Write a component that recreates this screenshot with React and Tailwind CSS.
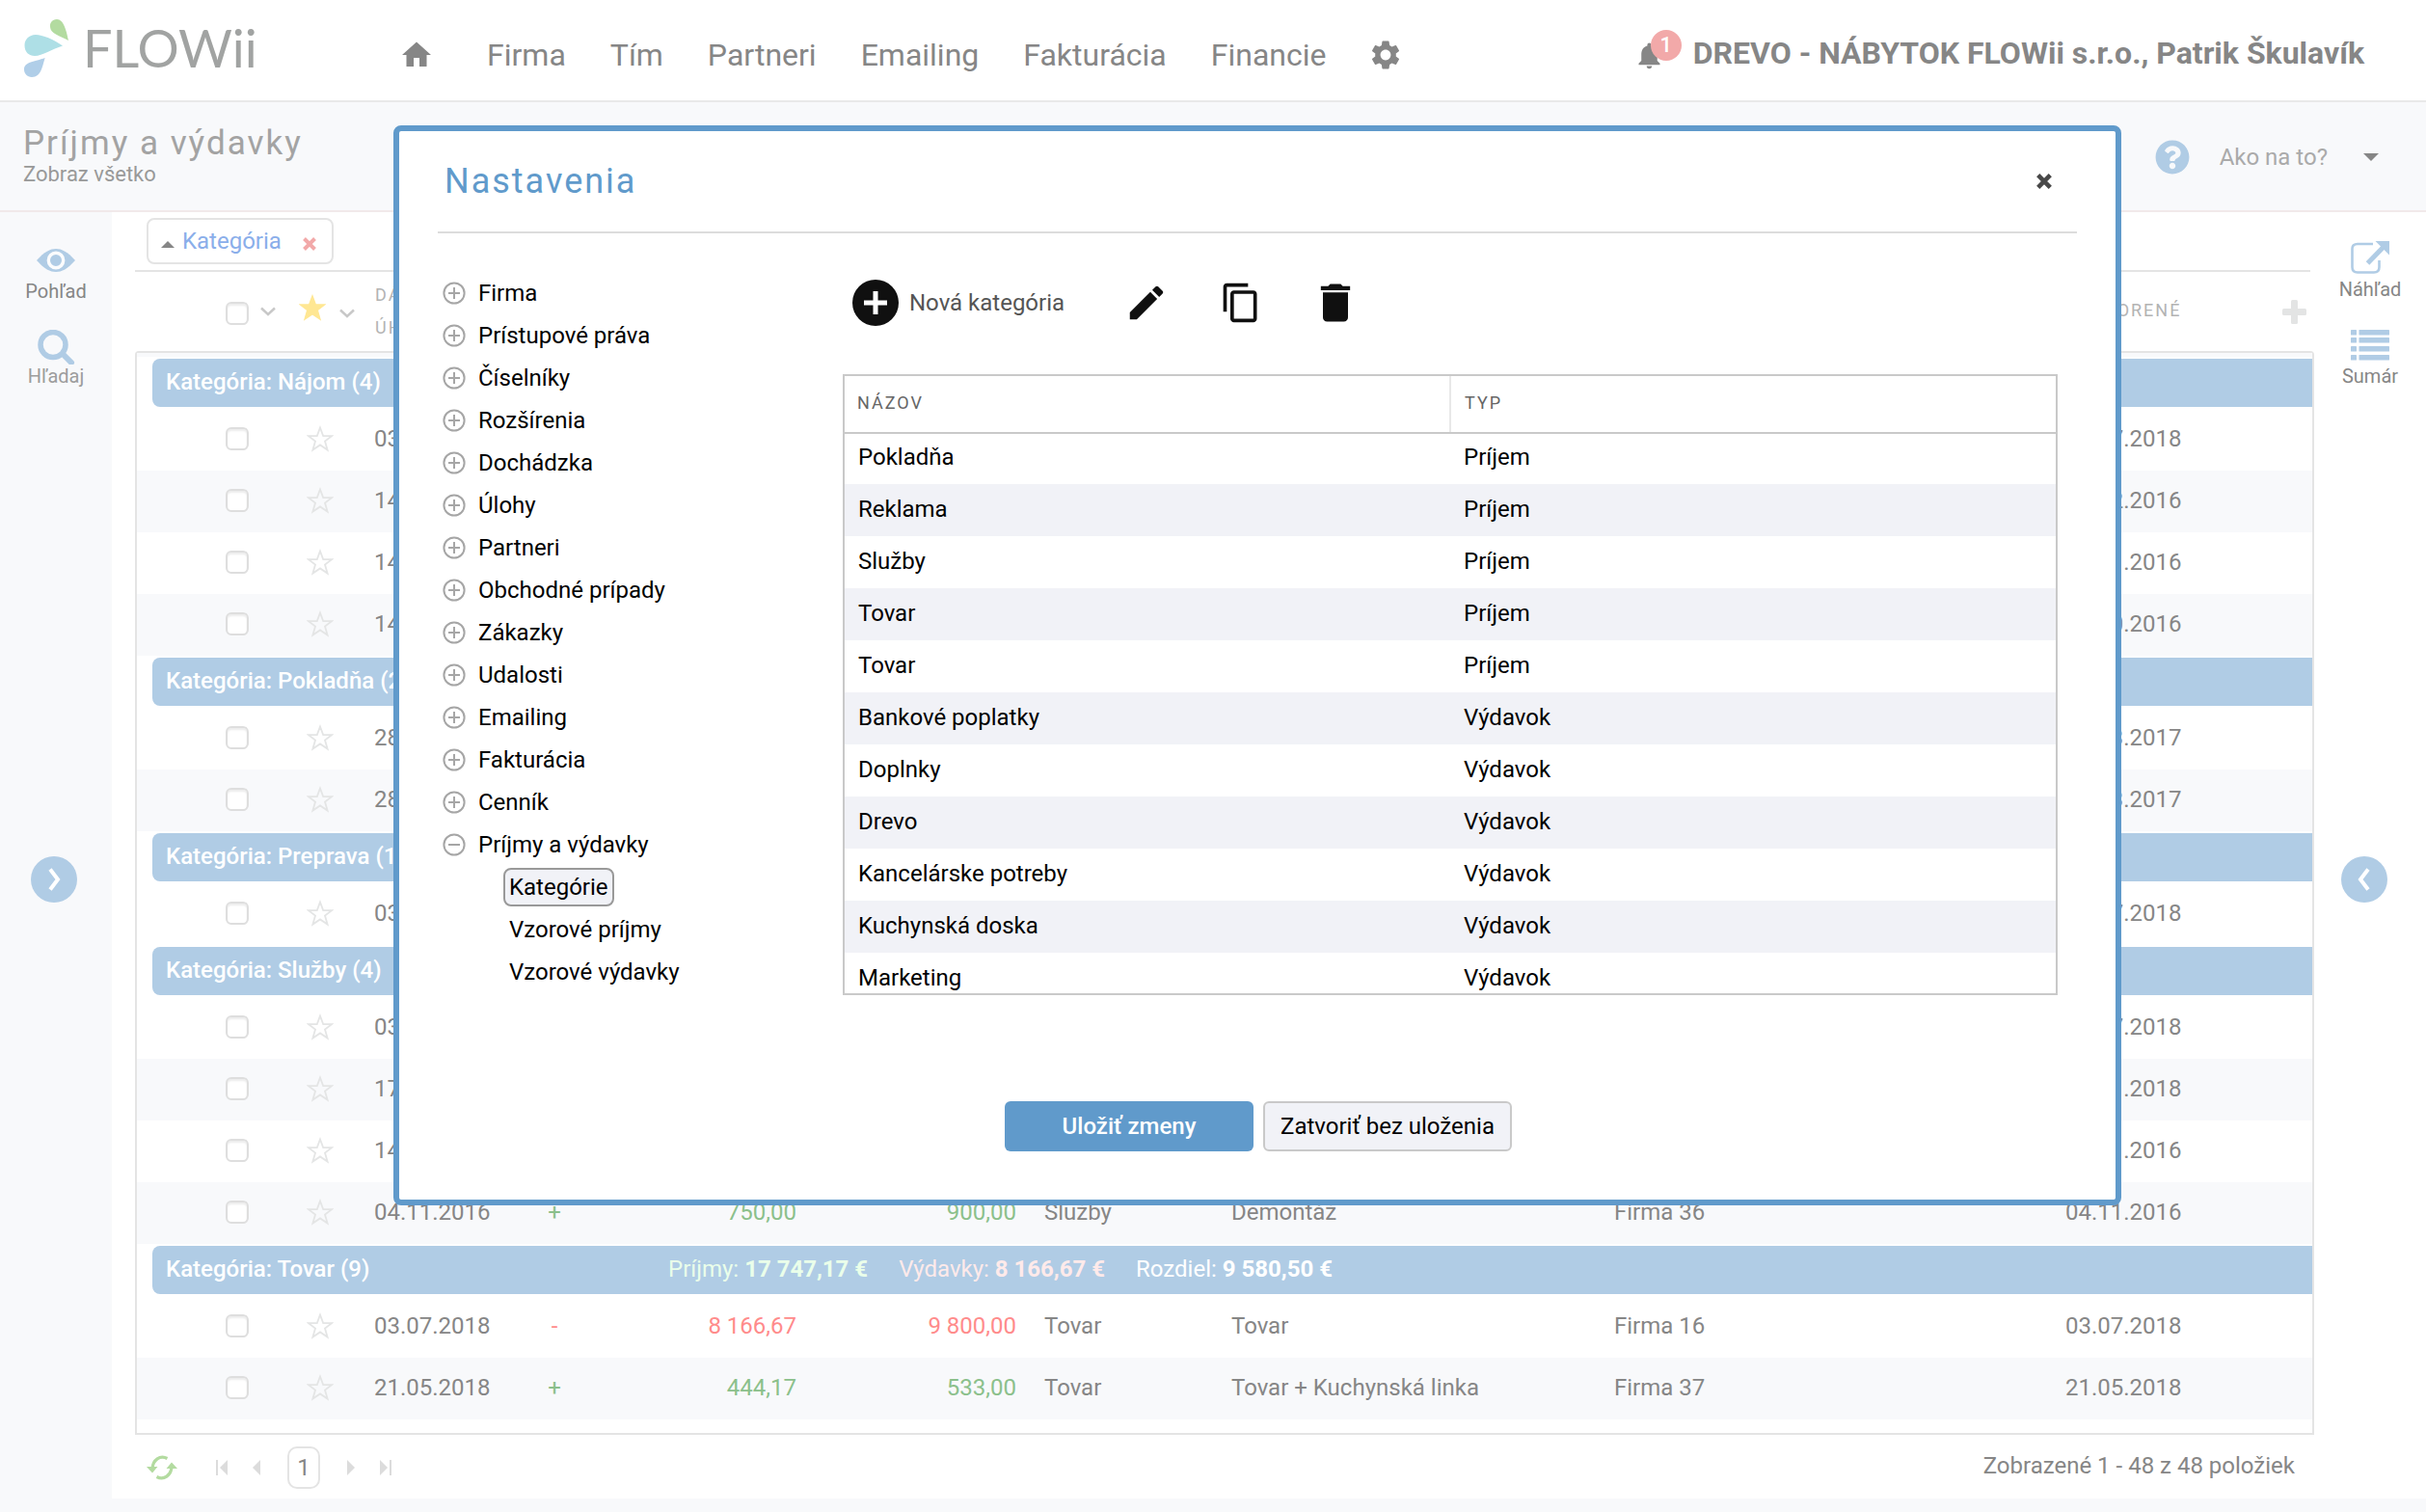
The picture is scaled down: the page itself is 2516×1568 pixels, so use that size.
import { useState } from 'react'
import { MdHome, MdSettings, MdNotifications, MdEdit, MdContentCopy, MdDelete } from 'react-icons/md'
import { FaQuestionCircle } from 'react-icons/fa'

const navItems = ['Firma', 'Tím', 'Partneri', 'Emailing', 'Fakturácia', 'Financie']

const groups = [
  {
    name: 'Nájom',
    count: 4,
    rows: [
      { paid: '03.07.2018', created: '03.07.2018' },
      { paid: '14.12.2016', created: '14.12.2016' },
      { paid: '14.11.2016', created: '14.11.2016' },
      { paid: '14.10.2016', created: '14.10.2016' },
    ],
  },
  {
    name: 'Pokladňa',
    count: 2,
    rows: [
      { paid: '28.03.2017', created: '28.03.2017' },
      { paid: '28.03.2017', created: '28.03.2017' },
    ],
  },
  {
    name: 'Preprava',
    count: 1,
    rows: [{ paid: '03.07.2018', created: '03.07.2018' }],
  },
  {
    name: 'Služby',
    count: 4,
    rows: [
      { paid: '03.07.2018', created: '03.07.2018' },
      { paid: '17.01.2018', created: '17.01.2018' },
      { paid: '14.11.2016', created: '14.11.2016' },
      { paid: '04.11.2016', sign: '+', net: '750,00', gross: '900,00', category: 'Služby', desc: 'Demontáž', partner: 'Firma 36', created: '04.11.2016' },
    ],
  },
  {
    name: 'Tovar',
    count: 9,
    totals: { income: '17 747,17 €', expense: '8 166,67 €', diff: '9 580,50 €' },
    rows: [
      { paid: '03.07.2018', sign: '-', net: '8 166,67', gross: '9 800,00', category: 'Tovar', desc: 'Tovar', partner: 'Firma 16', created: '03.07.2018' },
      { paid: '21.05.2018', sign: '+', net: '444,17', gross: '533,00', category: 'Tovar', desc: 'Tovar + Kuchynská linka', partner: 'Firma 37', created: '21.05.2018' },
    ],
  },
]

const settingsTree = [
  { label: 'Firma' },
  { label: 'Prístupové práva' },
  { label: 'Číselníky' },
  { label: 'Rozšírenia' },
  { label: 'Dochádzka' },
  { label: 'Úlohy' },
  { label: 'Partneri' },
  { label: 'Obchodné prípady' },
  { label: 'Zákazky' },
  { label: 'Udalosti' },
  { label: 'Emailing' },
  { label: 'Fakturácia' },
  { label: 'Cenník' },
  { label: 'Príjmy a výdavky', children: ['Kategórie', 'Vzorové príjmy', 'Vzorové výdavky'] },
]

const categories = [
  ['Pokladňa', 'Príjem'],
  ['Reklama', 'Príjem'],
  ['Služby', 'Príjem'],
  ['Tovar', 'Príjem'],
  ['Tovar', 'Príjem'],
  ['Bankové poplatky', 'Výdavok'],
  ['Doplnky', 'Výdavok'],
  ['Drevo', 'Výdavok'],
  ['Kancelárske potreby', 'Výdavok'],
  ['Kuchynská doska', 'Výdavok'],
  ['Marketing', 'Výdavok'],
]

function Logo() {
  return (
    <a href="#" className="flex items-center gap-3" aria-label="FLOWii">
      <svg width="50" height="64" viewBox="0 0 50 64" aria-hidden="true">
        <path d="M47 24 C45 14 42 2 35 2 C30 2 27.5 6 28 10 C28.5 17 38 19 47 24Z" fill="#b3dba0" />
        <path d="M41 29.5 C32 23 20 18 13 18 C6 18 1.5 23 1.5 29 C1.5 36 6 40 12 40 C20 40 30 33 41 29.5Z" fill="#aedfe6" />
        <path d="M22.7 42 C20 50 19 62 9 62 C4 62 1 58 1 54 C1 46 12 46 22.7 42Z" fill="#b0cee8" />
      </svg>
      <span className="font-['Lato',sans-serif] text-[54px] leading-[62px] text-[#a1a3a2]">FLOWii</span>
    </a>
  )
}

function Star({ filled }) {
  return (
    <svg width="28" height="28" viewBox="0 0 28 28" aria-hidden="true">
      <path
        d="M14 2.5 L17.2 11 L26 11.2 L19 16.6 L21.6 25.5 L14 20.4 L6.4 25.5 L9 16.6 L2 11.2 L10.8 11Z"
        fill={filled ? '#ffe793' : 'none'}
        stroke={filled ? '#ffe793' : '#e4e5e5'}
        strokeWidth="1.8"
      />
    </svg>
  )
}

function ChevronDown() {
  return (
    <svg width="16" height="10" viewBox="0 0 16 10" fill="none" stroke="#c8c8c8" strokeWidth="2.4" aria-hidden="true">
      <path d="M1 1.5 L8 8 L15 1.5" />
    </svg>
  )
}

function Cross({ size, color }) {
  return (
    <svg width={size} height={size} viewBox="0 0 14 14" stroke={color} strokeWidth="4" aria-hidden="true">
      <path d="M1.5 1.5 L12.5 12.5 M12.5 1.5 L1.5 12.5" />
    </svg>
  )
}

function Checkbox({ label }) {
  return (
    <input
      type="checkbox"
      aria-label={label}
      className="block w-6 h-6 appearance-none rounded-md border-2 border-[#dedede] bg-white shadow-[inset_0_2px_2px_#ececec]"
    />
  )
}

function SideButton({ label, labelClass, children }) {
  return (
    <button className="flex flex-col items-center">
      {children}
      <span className={`text-[20px] leading-6 ${labelClass}`}>{label}</span>
    </button>
  )
}

function CircleArrow({ direction }) {
  return (
    <button
      aria-label={direction === 'right' ? 'Rozbaliť ľavý panel' : 'Rozbaliť pravý panel'}
      className={`mt-[486px] flex h-12 w-12 items-center justify-center self-start rounded-full bg-[#b0cce5] ${
        direction === 'right' ? 'ml-8' : 'ml-7'
      }`}
    >
      <svg width="24" height="28" viewBox="0 0 24 28" fill="none" stroke="#fff" strokeWidth="4">
        <path d={direction === 'right' ? 'M8 3.5 L16 14 L8 24.5' : 'M16 3.5 L8 14 L16 24.5'} />
      </svg>
    </button>
  )
}

function Header() {
  return (
    <header className="flex h-[106px] items-center border-b-2 border-[#e9e9e9] pl-6 pr-16 text-[#868686]">
      <div className="w-[390px] pb-1 shrink-0">
        <Logo />
      </div>
      <nav className="flex flex-1 items-center pt-2.5 text-[32px] leading-10">
        <a href="#" aria-label="Domov" className="mr-[55px]"><MdHome size={36} /></a>
        <div className="flex gap-[46px]">
          {navItems.map((item) => (
            <a key={item} href="#">{item}</a>
          ))}
        </div>
        <a href="#" aria-label="Nastavenia" className="ml-[44px]"><MdSettings size={36} /></a>
      </nav>
      <div className="flex items-center pt-1.5">
        <button className="relative mr-[29px] pt-1" aria-label="Upozornenia">
          <MdNotifications size={33} />
          <span className="absolute -top-1.5 left-[18px] flex h-8 w-8 items-center justify-center rounded-full bg-[#f2a9a9] text-[22px] leading-7 font-medium text-white">1</span>
        </button>
        <button className="text-[32px] leading-10 font-bold">DREVO - NÁBYTOK FLOWii s.r.o., Patrik Škulavík</button>
      </div>
    </header>
  )
}

function SubHeader() {
  return (
    <div className="flex h-[114px] items-center justify-between border-b-2 border-[#f1e9ea] bg-[#f8f9fb] pl-6 pr-[49px]">
      <div className="pb-0.5">
        <h1 className="text-[35px] leading-10 tracking-[2px] text-[#a3a3a3]">Príjmy a výdavky</h1>
        <p className="text-[22px] leading-6 text-[#999]">Zobraz všetko</p>
      </div>
      <div className="flex items-center pt-0.5 text-[24px] text-[#aaa]">
        <FaQuestionCircle size={36} color="#b0cce5" className="mr-[31px]" />
        <button className="flex items-center gap-[37px]">
          Ako na to?
          <svg width="16" height="8" viewBox="0 0 16 8" fill="#868686"><path d="M0 0 H16 L8 8Z" /></svg>
        </button>
      </div>
    </div>
  )
}

function LeftPanel() {
  return (
    <aside className="flex w-[116px] shrink-0 flex-col items-center bg-[#f8f9fb] pt-[34px]">
      <SideButton label="Pohľad" labelClass="mt-1 text-[#868686]">
        <svg width="40" height="32" viewBox="0 0 40 32">
          <path d="M0 16 C8 7 14 4 20 4 C26 4 32 7 40 16 C32 25 26 28 20 28 C14 28 8 25 0 16Z" fill="#b0cce5" />
          <circle cx="20" cy="16" r="7.7" fill="#b0cce5" stroke="#fbfcfd" strokeWidth="3.4" />
        </svg>
      </SideButton>
      <div className="h-7" />
      <SideButton label="Hľadaj" labelClass="text-[#9d9d9d]">
        <svg width="40" height="36" viewBox="0 0 40 36" fill="none" stroke="#b0cce5">
          <circle cx="17" cy="15.5" r="13" strokeWidth="5.5" />
          <path d="M27 25 L36 34" strokeWidth="6" strokeLinecap="round" />
        </svg>
      </SideButton>
      <CircleArrow direction="right" />
    </aside>
  )
}

function RightPanel() {
  return (
    <aside className="flex w-[116px] shrink-0 flex-col items-center bg-white pt-7">
      <SideButton label="Náhľad" labelClass="mt-1 text-[#868686]">
        <svg width="40" height="36" viewBox="0 0 40 36" fill="none" stroke="#b0cce5">
          <path d="M23 5 H7 Q1.5 5 1.5 10 V29 Q1.5 34.5 7 34.5 H24 Q29.5 34.5 29.5 29 V22" strokeWidth="2.6" />
          <path d="M17.5 25 L34 8" strokeWidth="5" />
          <path d="M25.5 2 H40 V16.5Z" fill="#b0cce5" stroke="none" />
        </svg>
      </SideButton>
      <div className="h-7" />
      <SideButton label="Sumár" labelClass="mt-1 text-[#868686]">
        <svg width="40" height="34" viewBox="0 0 40 34" fill="#b0cce5">
          {[2, 10, 19, 28].map((y) => (
            <g key={y}>
              <rect x="0" y={y} width="6" height="5.5" rx="0.6" />
              <rect x="8.5" y={y} width="31.5" height="5.5" rx="0.6" />
            </g>
          ))}
        </svg>
      </SideButton>
      <CircleArrow direction="left" />
    </aside>
  )
}

function ListHeader() {
  return (
    <div className="flex h-[82px] items-center pl-[94px] text-[18px] leading-[34px] tracking-[2px] text-[#b3b3b3]">
      <div className="pt-1"><Checkbox label="Označiť všetko" /></div>
      <button aria-label="Možnosti výberu" className="ml-3"><ChevronDown /></button>
      <button aria-label="Obľúbené" className="ml-6 pb-2"><Star filled /></button>
      <button aria-label="Možnosti obľúbených" className="ml-[14px] pt-1"><ChevronDown /></button>
      <div className="ml-[21px] w-[166px]">DÁTUM<br />ÚHRADY</div>
      <div className="ml-auto w-[224px] pb-0.5">VYTVORENÉ</div>
      <button aria-label="Pridať stĺpec" className="mr-2">
        <svg width="25" height="25" viewBox="0 0 25 25" fill="#e3e4e4">
          <rect x="9" y="0" width="7" height="25" rx="1.5" />
          <rect x="0" y="9" width="25" height="7" rx="1.5" />
        </svg>
      </button>
    </div>
  )
}

function GroupRows({ group }) {
  return (
    <>
      <tr>
        <td colSpan={10} className="py-0.5 pl-4">
          <div className="flex h-[50px] items-center rounded-l-lg bg-[#b0cce5] pb-0.5 pl-[14px] text-white">
            <span className="w-[521px] font-medium">Kategória: {group.name} ({group.count})</span>
            {group.totals && (
              <div className="flex gap-8">
                <span className="text-[#eaffea]">Príjmy: <b>{group.totals.income}</b></span>
                <span className="text-[#ffeaea]">Výdavky: <b>{group.totals.expense}</b></span>
                <span>Rozdiel: <b>{group.totals.diff}</b></span>
              </div>
            )}
          </div>
        </td>
      </tr>
      {group.rows.map((row, i) => {
        const money = row.sign === '-' ? 'text-[#ff8b8b]' : 'text-[#8bc08b]'
        return (
          <tr key={i} className={`h-16 [&>td]:pb-0.5 ${i % 2 ? 'bg-[#f8f9fb]' : 'bg-white'}`}>
            <td className="pl-[92px]"><Checkbox label={`Označiť ${row.paid}`} /></td>
            <td className="pl-2">
              <button className="block" aria-label="Pridať k obľúbeným"><Star /></button>
            </td>
            <td>{row.paid}</td>
            <td className={`text-center ${money}`}>{row.sign}</td>
            <td className={`text-right ${money}`}>{row.net}</td>
            <td className={`text-right ${money}`}>{row.gross}</td>
            <td className="pl-[29px]">{row.category}</td>
            <td>{row.desc}</td>
            <td>{row.partner}</td>
            <td>{row.created}</td>
          </tr>
        )
      })}
    </>
  )
}

function Pagination() {
  return (
    <div className="flex h-[66px] items-center pl-3 pr-5 pt-0.5 text-[24px] text-[#868686]">
      <button aria-label="Obnoviť" className="mr-10">
        <svg width="32" height="26" viewBox="0 0 32 26" fill="none" stroke="#b3dba0" strokeWidth="3.2">
          <path d="M21.5 3.5 C14 -0.5 6.5 5 6 14" />
          <path d="M10.5 22.5 C18 26.5 25.5 21 26 12" />
          <path d="M0 12 H11.5 L6 18.5Z M20.5 14 H32 L26 7.5Z" fill="#b3dba0" stroke="none" />
        </svg>
      </button>
      <button aria-label="Prvá strana" className="mr-[26px]">
        <svg width="12" height="16" viewBox="0 0 12 16" fill="#dcdcdc"><path d="M0 0 H2 V16 H0Z M12 0 V16 L4 8Z" /></svg>
      </button>
      <button aria-label="Predchádzajúca strana">
        <svg width="8" height="16" viewBox="0 0 8 16" fill="#dcdcdc"><path d="M8 0 V16 L0 8Z" /></svg>
      </button>
      <button className="mx-7 h-11 w-[34px] rounded-[10px] border-2 border-[#e4e4e4]">1</button>
      <button aria-label="Ďalšia strana" className="mr-[26px]">
        <svg width="8" height="16" viewBox="0 0 8 16" fill="#dcdcdc"><path d="M0 0 V16 L8 8Z" /></svg>
      </button>
      <button aria-label="Posledná strana">
        <svg width="12" height="16" viewBox="0 0 12 16" fill="#dcdcdc"><path d="M10 0 H12 V16 H10Z M0 0 V16 L8 8Z" /></svg>
      </button>
      <span className="ml-auto pb-1">Zobrazené 1 - 48 z 48 položiek</span>
    </div>
  )
}

function RecordList() {
  return (
    <main className="min-w-0 flex-1 pl-6 pt-1.5">
      <div className="ml-3 flex h-12 w-[194px] items-center rounded-lg border-2 border-[#e4e4e4] pl-[13px] text-[24px] text-[#8aaeea]">
        <svg width="14" height="7" viewBox="0 0 14 7" fill="#868686" className="mt-1.5"><path d="M0 7 H14 L7 0Z" /></svg>
        <span className="ml-2">Kategória</span>
        <button aria-label="Zrušiť zoskupenie" className="ml-[22px] mt-1.5"><Cross size={14} color="#f2a9a9" /></button>
      </div>
      <div className="mt-1.5 mr-1 h-0.5 bg-[#e4e4e4]" />
      <ListHeader />
      <div className="rounded-t border-2 border-[#e4e4e4] pb-3.5">
        <div className="h-1 bg-[#f8f9fb]" />
        <table className="w-full table-fixed border-collapse text-[24px] leading-8 text-[#868686]">
          <colgroup>
            <col className="w-[168px]" />
            <col className="w-[78px]" />
            <col className="w-[167px]" />
            <col className="w-[40px]" />
            <col className="w-[231px]" />
            <col className="w-[228px]" />
            <col className="w-[223px]" />
            <col />
            <col className="w-[468px]" />
            <col className="w-[256px]" />
          </colgroup>
          <tbody>
            {groups.map((g) => (
              <GroupRows key={g.name} group={g} />
            ))}
          </tbody>
        </table>
      </div>
      <Pagination />
    </main>
  )
}

function TreeIcon({ open }) {
  return (
    <svg width="24" height="24" viewBox="0 0 24 24" fill="none" stroke="#a6a6a6" strokeWidth="2" aria-hidden="true">
      <circle cx="12" cy="12" r="10.6" />
      <path d={open ? 'M6 12 H18' : 'M6 12 H18 M12 6 V18'} />
    </svg>
  )
}

function SettingsTree({ active, onSelect }) {
  return (
    <ul className="w-[420px] shrink-0 pl-[5px] pt-10 text-[24px] leading-[44px]">
      {settingsTree.map((node) => (
        <li key={node.label}>
          <button className="flex items-center gap-[13px]">
            <TreeIcon open={!!node.children} />
            {node.label}
          </button>
          {node.children && (
            <ul className="pl-[63px]">
              {node.children.map((child) => (
                <li key={child} className="flex h-11 items-center">
                  <button
                    onClick={() => onSelect(child)}
                    className={`h-10 rounded-lg border-2 px-1 leading-9 ${
                      child === active ? 'border-[#999] bg-[#f1f2f7]' : 'border-transparent'
                    }`}
                  >
                    {child}
                  </button>
                </li>
              ))}
            </ul>
          )}
        </li>
      ))}
    </ul>
  )
}

function SettingsDialog() {
  const [active, setActive] = useState('Kategórie')

  return (
    <div
      role="dialog"
      aria-labelledby="settings-title"
      className="absolute top-[130px] right-[316px] left-[408px] rounded-lg border-6 border-[#609acb] bg-white px-10 pb-[50px] text-black"
    >
      <div className="flex h-[106px] items-center justify-between border-b-2 border-[#dcdcdc] pl-[7px] pr-[26px]">
        <h2 id="settings-title" className="text-[36px] tracking-[2px] text-[#609acb]">Nastavenia</h2>
        <button aria-label="Zavrieť"><Cross size={16} color="#484848" /></button>
      </div>

      <div className="flex">
        <SettingsTree active={active} onSelect={setActive} />

        <div className="min-w-0 flex-1 pr-5 pt-12">
          <div className="flex h-12 items-center pl-2.5 text-[#101010]">
            <button className="mr-[59px] flex items-center gap-[11px] text-[24px] text-[#555]">
              <svg width="48" height="48" viewBox="0 0 48 48">
                <circle cx="24" cy="24" r="24" fill="#101010" />
                <path d="M12 24 H36 M24 12 V36" stroke="#fff" strokeWidth="5" />
              </svg>
              Nová kategória
            </button>
            <div className="flex items-center gap-[46px]">
              <button aria-label="Upraviť" className="flex w-[52px] justify-center"><MdEdit size={46} /></button>
              <button aria-label="Kopírovať" className="flex w-[52px] justify-center"><MdContentCopy size={44} /></button>
              <button aria-label="Vymazať" className="flex w-[52px] justify-center"><MdDelete size={52} /></button>
            </div>
          </div>

          <div className="mt-[50px] h-[644px] overflow-hidden border-2 border-[#c9c9c9]">
            <table className="w-full table-fixed border-collapse text-left text-[24px] leading-8">
              <thead>
                <tr className="h-[58px] text-[18px] tracking-[2px] text-[#666]">
                  <th className="border-r-2 border-[#e8e8e8] pb-0.5 pl-[13px] font-normal">NÁZOV</th>
                  <th className="pb-0.5 pl-[14px] font-normal">TYP</th>
                </tr>
              </thead>
              <tbody>
                {categories.map(([name, type], i) => (
                  <tr
                    key={i}
                    className="h-[54px] even:bg-[#f1f2f7] first:shadow-[inset_0_2px_0_#c9c9c9]"
                  >
                    <td className="pb-0.5 pl-[14px]">{name}</td>
                    <td className="pb-0.5 pl-[14px]">{type}</td>
                  </tr>
                ))}
              </tbody>
            </table>
          </div>
        </div>
      </div>

      <div className="mt-[110px] flex justify-center gap-2.5 pl-0.5 text-[24px]">
        <button className="h-[52px] w-[258px] rounded-md bg-[#609acb] font-medium text-white">Uložiť zmeny</button>
        <button className="h-[52px] w-[258px] rounded-md border-2 border-[#c9c9c9] bg-[#f1f2f7]">Zatvoriť bez uloženia</button>
      </div>
    </div>
  )
}

export default function App() {
  return (
    <div className="relative min-h-screen bg-white font-['Roboto','Open_Sans',sans-serif]">
      <Header />
      <SubHeader />
      <div className="flex">
        <LeftPanel />
        <RecordList />
        <RightPanel />
      </div>
      <div className="h-3.5 bg-[#f8f9fb]" />
      <SettingsDialog />
    </div>
  )
}
